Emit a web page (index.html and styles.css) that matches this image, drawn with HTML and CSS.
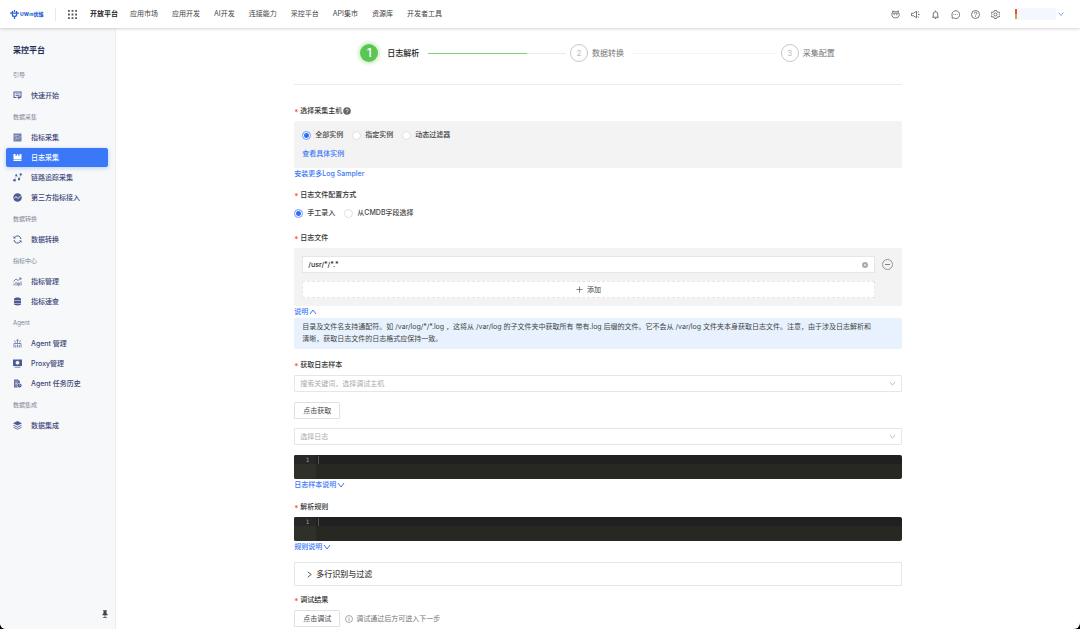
FILE: index.html
```html
<!DOCTYPE html>
<html lang="zh-CN">
<head>
<meta charset="utf-8">
<title>采控平台</title>
<link rel="stylesheet" href="styles.css">
</head>
<body>
<div class="app">
  <header class="topbar">
    <a class="logo" href="#" aria-label="UWin优维">
      <svg class="logo-mark" viewBox="0 0 9 9"><path d="M0 3.2h9M2.4 1v3.4a2.1 2.1 0 0 0 4.2 0V1M4.5 0v2M4.5 6.4V9M2 6.2h1" fill="none" stroke="#2c63dc" stroke-width="1.3"/></svg>
      <span class="logo-text">UW<i>i</i>n优维</span>
    </a>
    <button class="icon-btn apps" aria-label="应用"><svg viewBox="0 0 9 9" fill="#555"><path d="M0 0h1.800v1.800H0zM3.600 0h1.800v1.800H3.600zM7.200 0H9v1.800H7.200zM0 3.600h1.800v1.800H0zM3.600 3.600h1.800v1.800H3.600zM7.200 3.600H9v1.800H7.200zM0 7.200h1.800V9H0zM3.600 7.200h1.800V9H3.600zM7.200 7.200H9V9H7.200z"/></svg></button>
    <nav class="topnav">
      <a class="current" href="#">开放平台</a><a href="#">应用市场</a><a href="#">应用开发</a><a href="#">AI开发</a><a href="#">连接能力</a><a href="#">采控平台</a><a href="#">API集市</a><a href="#">资源库</a><a href="#">开发者工具</a>
    </nav>
    <div class="tools">
      <button class="icon-btn" aria-label="助手"><svg class="line" viewBox="0 0 18 18"><path d="M3.500 1.500v3C1 6 1 12 3.500 14c2.500 2.300 8.500 2.300 11 0 2.500-2 2.500-8 0-9.500v-3L12 3.500H6zM3 6.500h12M6.500 8v2.500M11.500 8v2.500"/></svg></button>
      <button class="icon-btn" aria-label="公告"><svg class="line" viewBox="0 0 18 18"><path d="M1 6.500h4l6-4v13l-6-4H1zM14 9h3.500M13.500 5l2.500-2M13.500 13l2.500 2"/></svg></button>
      <button class="icon-btn" aria-label="通知"><svg class="line" viewBox="0 0 18 18"><path d="M2.500 14.500h13M4.500 14.500V8a4.500 4.500 0 0 1 9 0v6.500M9 1v2M7.500 17h3"/></svg></button>
      <button class="icon-btn" aria-label="消息"><svg class="line" viewBox="0 0 18 18"><path d="M2 16l.5-3.500A7.800 7.800 0 1 1 6 16.200zM5 9h1.500M8.300 9h1.500M11.600 9h1.500"/></svg></button>
      <button class="icon-btn" aria-label="帮助"><svg class="line" viewBox="0 0 18 18"><circle cx="9" cy="9" r="8"/><path d="M6.500 7c0-3.500 5-3.300 5-.3C11.500 8.800 9 8.500 9 11M9 12.500V14"/></svg></button>
      <button class="icon-btn" aria-label="设置"><svg class="line" viewBox="0 0 18 18"><path d="M7 1h4l.7 2.300L14 4.500l2.300-.5L18 7l-1.600 2L18 11l-1.700 3-2.300-.5-2.300 1.200L11 17H7l-.7-2.300L4 13.500l-2.300.5L0 11l1.600-2L0 7l1.700-3 2.300.5 2.300-1.200z"/><circle cx="9" cy="9" r="3"/></svg></button>
      <button class="user" aria-label="用户"><span class="avatar"></span><span class="user-name"></span><svg class="chev" viewBox="0 0 8 8"><path d="M1 2l3 4 3-4"/></svg></button>
    </div>
  </header>
  <div class="body">
    <aside class="sidebar">
      <h1 class="side-title">采控平台</h1>
      <nav class="side-nav">
        <h2>引导</h2>
        <a href="#"><svg viewBox="0 0 18 18"><path d="M1 1h16v12h-2V3H3v9h4v2H1zM5 5h8v1.500H5zM5 8h8v1.500H5zM9 11h7v3h-2l-3 3v-3H9z"/></svg>快速开始</a>
        <h2>数据采集</h2>
        <a href="#"><svg viewBox="0 0 18 18"><path d="M1 1h16v16H1z" opacity=".75"/><path d="M3 5h8M3 8h5M4 14l4-4 3 2 4-6" fill="none" stroke="#dfe4f4" stroke-width="1"/></svg>指标采集</a>
        <a class="active" href="#"><svg viewBox="0 0 18 18"><path d="M1 2h4v4l1.500-1.500L8 6V2h2v4l1.500-1.500L13 6V2h4v10.500H1zM1 13.500h16V16H1z"/></svg>日志采集</a>
        <a href="#"><svg viewBox="0 0 18 18"><path d="M3 14L7 5l6 7 2-9" fill="none" stroke="#4d5a93" stroke-width="1" stroke-dasharray="2 1"/><circle cx="3" cy="14.500" r="2.500"/><circle cx="6.500" cy="4.500" r="2"/><circle cx="12" cy="12.500" r="2.300"/><circle cx="15.500" cy="3" r="2.300"/></svg>链路追踪采集</a>
        <a href="#"><svg viewBox="0 0 18 18"><circle cx="9" cy="9" r="8.500"/><path d="M2 11l4-4 4 4 5-5" fill="none" stroke="#f5f7fa" stroke-width="2"/></svg>第三方指标接入</a>
        <h2>数据转换</h2>
        <a href="#"><svg viewBox="0 0 18 18"><path d="M2 10a7 7 0 0 0 12 4M16 8A7 7 0 0 0 4 4" fill="none" stroke="#4d5a93" stroke-width="2"/><path d="M1 2v5h5zM17 16v-5h-5z"/></svg>数据转换</a>
        <h2>指标中心</h2>
        <a href="#"><svg viewBox="0 0 18 18"><path d="M1 9l5-5 4 3 6-5M12.500 2H16v3.500M2 17v-4M6 17V9.500M9.500 12h3v4.500h-3zM16 17V9" fill="none" stroke="#4d5a93" stroke-width="1.500"/></svg>指标管理</a>
        <a href="#"><svg viewBox="0 0 18 18"><path d="M2 4c0-4 14-4 14 0v3H2zM2 8h14v4H2zM2 13h14v1.500c0 3-14 3-14 0z"/></svg>指标速查</a>
        <h2>Agent</h2>
        <a href="#"><svg viewBox="0 0 18 18"><path d="M2 17V9h14v8M5.500 17v-5M9 17v-6M12.500 17v-5M9 8V2M5 7L3 3M13 7l2-4M6.500 3L9 1l2.500 2" fill="none" stroke="#4d5a93" stroke-width="1.400"/></svg>Agent 管理</a>
        <a href="#"><svg viewBox="0 0 18 18"><path fill-rule="evenodd" d="M0 1h18v13H0zM9 3.500l-3.500 2v4L9 11.500l3.500-2v-4zM3 15.500h12V17H3z"/></svg>Proxy管理</a>
        <a href="#"><svg viewBox="0 0 18 18"><path d="M2 1h8l4 4v3a5 5 0 0 0-4 9H2z" opacity=".85"/><path d="M4.500 6h5M4.500 9h4M4.500 12h3" stroke="#f5f7fa" stroke-width="1.200"/><circle cx="13" cy="13" r="4.200"/><path d="M13 10.500V13h2.500" fill="none" stroke="#f5f7fa"/></svg>Agent 任务历史</a>
        <h2>数据集成</h2>
        <a href="#"><svg viewBox="0 0 18 18"><path d="M9 0l9 4.500L9 9 0 4.500z"/><path d="M1 8.500l8 4 8-4M1 12.500l8 4 8-4" fill="none" stroke="#4d5a93" stroke-width="1.700"/></svg>数据集成</a>
      </nav>
      <button class="icon-btn pin" aria-label="固定"><svg viewBox="0 0 8 10" fill="#444"><path d="M1.500 0h5v1H6v3l1.500 1.500v1h-7v-1L2 4V1h-.5zM3.500 6.500h1V9h-1zM1.500 9h5v1h-5z"/></svg></button>
    </aside>
    <main class="main">
      <div class="content">
        <ol class="steps">
          <li class="step on"><span class="num">1</span>日志解析</li>
          <li class="track done" aria-hidden="true"></li>
          <li class="step"><span class="num">2</span>数据转换</li>
          <li class="track" aria-hidden="true"></li>
          <li class="step"><span class="num">3</span>采集配置</li>
        </ol>
        <form class="form">
          <fieldset class="field host">
            <legend class="label">选择采集主机<svg class="help" viewBox="0 0 8 8"><circle cx="4" cy="4" r="3.800" fill="#666"/><path d="M2.800 3.200c0-1.600 2.500-1.500 2.500 0C5.300 4 4 4 4 5M4 5.600v.8" fill="none" stroke="#fff" stroke-width=".7"/></svg></legend>
            <div class="panel">
              <div class="radios">
                <label><input type="radio" name="host" checked>全部实例</label>
                <label><input type="radio" name="host">指定实例</label>
                <label><input type="radio" name="host">动态过滤器</label>
              </div>
              <a class="link" href="#">查看具体实例</a>
            </div>
            <a class="link" href="#">安装更多Log Sampler</a>
          </fieldset>
          <fieldset class="field mode">
            <legend class="label">日志文件配置方式</legend>
            <div class="radios">
              <label><input type="radio" name="mode" checked>手工录入</label>
              <label><input type="radio" name="mode">从CMDB字段选择</label>
            </div>
          </fieldset>
          <div class="field files">
            <label class="label" for="path">日志文件</label>
            <div class="panel file-grid">
              <div class="input-box">
                <input id="path" type="text" value="/usr/*/*.*">
                <button type="button" class="icon-btn clear" aria-label="清除"><svg viewBox="0 0 8 8"><circle cx="4" cy="4" r="4" fill="#aaa"/><path d="M2.700 2.700l2.600 2.600M5.300 2.700L2.700 5.300" stroke="#fff" stroke-width=".8"/></svg></button>
              </div>
              <button type="button" class="icon-btn remove" aria-label="删除"><svg viewBox="0 0 11 11"><circle cx="5.500" cy="5.500" r="5" fill="none" stroke="#8c8c8c" stroke-width=".9"/><path d="M3 5.500h5" stroke="#777" stroke-width=".9"/></svg></button>
              <button type="button" class="add"><svg viewBox="0 0 8 8"><path d="M4 .5v7M.5 4h7" stroke="#555" stroke-width=".8"/></svg>添加</button>
            </div>
            <a class="link" href="#">说明<svg class="chev" viewBox="0 0 8 8"><path d="M1 6l3-4 3 4"/></svg></a>
            <p class="notice">目录及文件名支持通配符。如 /var/log/*/*.log ，这将从 /var/log 的子文件夹中获取所有 带有.log 后缀的文件。它不会从 /var/log 文件夹本身获取日志文件。注意，由于涉及日志解析和<br>清晰，获取日志文件的日志格式应保持一致。</p>
          </div>
          <div class="field sample">
            <label class="label" for="host-search">获取日志样本</label>
            <div class="select"><select id="host-search"><option>搜索关键词，选择调试主机</option></select><svg class="chev" viewBox="0 0 8 8"><path d="M1 2l3 4 3-4"/></svg></div>
            <button type="button" class="btn">点击获取</button>
            <div class="select"><select aria-label="选择日志"><option>选择日志</option></select><svg class="chev" viewBox="0 0 8 8"><path d="M1 2l3 4 3-4"/></svg></div>
            <div class="editor"><span class="gutter">1</span><textarea rows="2" aria-label="日志样本"></textarea></div>
            <a class="link" href="#">日志样本说明<svg class="chev" viewBox="0 0 8 8"><path d="M1 2l3 4 3-4"/></svg></a>
          </div>
          <div class="field rule">
            <label class="label" for="rule">解析规则</label>
            <div class="editor"><span class="gutter">1</span><textarea id="rule" rows="2"></textarea></div>
            <a class="link" href="#">规则说明<svg class="chev" viewBox="0 0 8 8"><path d="M1 2l3 4 3-4"/></svg></a>
          </div>
          <button type="button" class="collapse"><svg class="chev" viewBox="0 0 8 8"><path d="M2 1l4 3-4 3"/></svg>多行识别与过滤</button>
          <div class="field result">
            <div class="label">调试结果</div>
            <div class="result-row">
              <button type="button" class="btn">点击调试</button>
              <span class="hint"><svg viewBox="0 0 8 8"><circle cx="4" cy="4" r="3.500" fill="none" stroke="#888" stroke-width=".7"/><path d="M4 1.900v.8M4 3.400V6" stroke="#888" stroke-width=".8"/></svg>调试通过后方可进入下一步</span>
            </div>
          </div>
        </form>
      </div>
    </main>
  </div>
</div>
</body>
</html>
```
FILE: styles.css
```css
* { box-sizing: border-box; }
html { background: #000; }
body {
  margin: 0;
  font: 7px/12px Inter, "Noto Sans CJK SC", sans-serif;
  color: #444;
}
button, input, select, textarea { font: inherit; color: inherit; margin: 0; }
button { cursor: pointer; }
a { color: inherit; text-decoration: none; }
svg { display: block; flex: none; }
.app {
  display: flex;
  flex-direction: column;
  height: 100vh;
  overflow: hidden;
  background: #fff;
  border-radius: 0 0 6px 6px;
}
.icon-btn { display: block; padding: 0; border: 0; background: none; }
.line { width: 9px; height: 9px; fill: none; stroke: #555; stroke-width: 1.6; }
.chev { width: 8px; height: 8px; fill: none; stroke: currentColor; stroke-width: 1; }

/* top bar */
.topbar {
  display: flex;
  align-items: center;
  flex: none;
  height: 28px;
  padding: 0 16px 0 10px;
  box-shadow: 0 1px 3px rgba(0, 0, 0, .18);
  z-index: 1;
}
.logo {
  display: flex;
  align-items: center;
  gap: 1px;
  width: 46px;
  height: 13px;
  border-right: 1px solid #e8e8e8;
}
.logo-mark { width: 9px; height: 9px; }
.logo-text { font-size: 5px; font-weight: 800; color: #2c63dc; white-space: nowrap; }
.logo-text i { color: #6fd052; }
.apps { margin: 0 13px 0 12px; }
.apps svg { width: 9px; height: 9px; }
.topnav { display: flex; gap: 14px; white-space: nowrap; }
.topnav .current { font-weight: 600; color: #222; margin-right: -2px; }
.tools { display: flex; align-items: center; gap: 11px; margin-left: auto; }
.user { display: flex; align-items: center; margin-left: 4px; padding: 0; border: 0; background: none; color: #5b8ff9; }
.avatar { width: 2px; height: 10px; background: linear-gradient(#e8522c 50%, #c8a64a 50%); }
.user-name { width: 39px; height: 12px; background: #f5f7fe; }
.user .chev { width: 6px; height: 6px; margin-left: 2px; }

/* sidebar */
.body { display: flex; flex: 1; min-height: 0; }
.sidebar {
  display: flex;
  flex-direction: column;
  flex: none;
  width: 116px;
  padding: 14px 7px 11px 6px;
  background: #f6f8fa;
  border-right: 1px solid #eceef1;
}
.side-title { margin: 0 7px 5px; font-size: 8px; line-height: 16px; font-weight: 600; color: #252c55; }
.side-nav h2 { margin: 0 7px; padding-top: 2px; font-size: 6px; line-height: 20px; font-weight: 400; color: #808698; }
.side-nav a {
  display: flex;
  align-items: center;
  gap: 9px;
  height: 19px;
  margin-top: 1px;
  padding: 0 7px;
  border-radius: 2px;
  color: #3d4677;
  font-weight: 500;
}
.side-nav svg { width: 9px; height: 9px; fill: #4d5a93; }
.side-nav .active { background: #3b78f7; color: #fff; box-shadow: 0 1px 4px rgba(59, 120, 247, .35); }
.side-nav .active svg { fill: #fff; }
.pin { margin: auto 0 0 auto; }
.pin svg { width: 6px; height: 8px; }

/* steps */
.main { flex: 1; min-width: 0; }
.content { width: 63%; min-width: 600px; margin: 0 auto; }
.steps {
  display: flex;
  align-items: center;
  gap: 9px;
  margin: 0;
  padding: 16px 67px 22px 66px;
  border-bottom: 1px solid #ebebeb;
  list-style: none;
}
.step { display: flex; align-items: center; gap: 4px; font-size: 8px; color: #777; white-space: nowrap; }
.num {
  display: grid;
  place-items: center;
  width: 18px;
  height: 18px;
  border: 1px solid #c8c8c8;
  border-radius: 50%;
  color: #bbb;
}
.step.on { gap: 9px; color: #222; font-weight: 500; }
.on .num {
  border: 0;
  background: #5ac653;
  color: #fff;
  font-size: 12px;
  box-shadow: 0 0 0 2px #dff3d8, 0 0 0 4px #f4fbf1;
}
.track { flex: 143; height: 1px; margin-right: -5px; background: #f3f3f3; }
.done { flex: 137; background: linear-gradient(90deg, #7bd275 72%, #e0f4dd 72%); }

/* form */
.field { display: flex; flex-direction: column; align-items: stretch; min-width: 0; margin: 0; padding: 0; border: 0; }
.label {
  display: flex;
  align-items: center;
  gap: 1px;
  padding: 0;
  margin-bottom: 2px;
  line-height: 16px;
  font-weight: 500;
  color: #333;
}
.label::before { content: "*"; width: 5px; color: #f5453f; font-size: 8px; line-height: 12px; padding-top: 2px; }
.help { width: 8px; height: 8px; }
.host { margin-top: 18px; }
.mode { margin-top: 7px; }
.mode .label { margin-bottom: 4px; }
.files { margin-top: 11px; }
.sample { margin-top: 8px; }
.rule { margin-top: 8px; }
.result { margin-top: 6px; }
.panel { padding: 8px; border-radius: 2px; background: #f3f3f3; }
.radios { display: flex; gap: 9px; font-weight: 500; }
.radios label { display: flex; align-items: center; gap: 4px; }
.radios input {
  appearance: none;
  width: 9px;
  height: 9px;
  border: 1px solid #e0e0e0;
  border-radius: 50%;
  background: #fff;
}
.radios input:checked { border-color: #6a9af9; background: radial-gradient(circle, #2f6ff5 2px, #fff 3px); }
.link { display: flex; align-items: center; align-self: flex-start; gap: 1px; color: #3b78f7; font-weight: 500; }
.panel .link { margin-top: 7px; }
.file-grid { display: grid; grid-template-columns: 1fr 11px; gap: 8px 7px; align-items: center; padding-right: 9px; }
.input-box { display: flex; align-items: center; height: 17px; padding: 0 6px 0 5px; border: 1px solid #e6e6e6; background: #fff; }
.input-box input { flex: 1; min-width: 0; padding: 0; border: 0; outline: 0; background: none; font-weight: 500; color: #222; }
.clear svg { width: 6px; height: 6px; }
.remove svg { width: 11px; height: 11px; }
.add {
  display: flex;
  align-items: center;
  justify-content: center;
  gap: 4px;
  height: 17px;
  padding: 0;
  border: 1px dashed #e6e6e6;
  background: #fff;
}
.add svg { width: 7px; height: 7px; }
.notice { margin: 0; padding: 3px 8px 4px; border-radius: 2px; background: #e7f2fe; color: #444; }
.select { display: flex; align-items: center; height: 17px; padding-right: 5px; border: 1px solid #e6e6e6; border-radius: 1px; }
.select select { appearance: none; flex: 1; height: 15px; padding: 0 5px; border: 0; background: none; color: #aaa; }
.select .chev { width: 7px; height: 7px; color: #bbb; }
.btn {
  align-self: flex-start;
  height: 17px;
  padding: 0 8px;
  border: 1px solid #e0e0e0;
  border-radius: 1px;
  background: #fff;
}
.sample .btn { margin: 10px 0 9px; }
.editor {
  display: flex;
  height: 24px;
  overflow: hidden;
  border-radius: 2px;
  background: linear-gradient(#202020 9px, #272822 9px);
}
.sample .editor { margin-top: 10px; }
.gutter {
  width: 22px;
  padding-right: 7px;
  background: linear-gradient(#272727 9px, #2f3129 9px);
  color: #a0a09a;
  font: 6px/9px "DejaVu Sans Mono", monospace;
  text-align: right;
}
.editor textarea {
  flex: 1;
  padding: 0 3px;
  border: 0;
  outline: 0;
  resize: none;
  overflow: hidden;
  background: linear-gradient(#555, #555) 2px 1px / 1px 8px no-repeat;
  color: #f8f8f2;
  font: 6px/9px "DejaVu Sans Mono", monospace;
}
.collapse {
  display: flex;
  align-items: center;
  gap: 3px;
  width: 100%;
  height: 24px;
  margin-top: 9px;
  padding: 0 11px;
  border: 1px solid #e6e6e6;
  border-radius: 1px;
  background: #fff;
  font-size: 8px;
  font-weight: 500;
}
.collapse .chev { width: 7px; height: 7px; }
.result-row { display: flex; align-items: center; gap: 5px; }
.hint { display: flex; align-items: center; gap: 3px; color: #777; }
.hint svg { width: 8px; height: 8px; }
```
